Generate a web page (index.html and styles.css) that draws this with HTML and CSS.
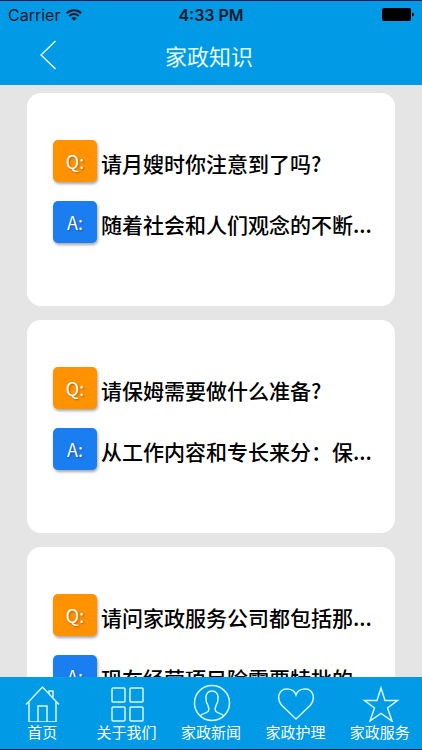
FILE: index.html
```html
<!DOCTYPE html>
<html lang="zh-CN">
<head>
<meta charset="utf-8">
<meta name="viewport" content="width=device-width, initial-scale=1">
<title>家政知识</title>
<link rel="stylesheet" href="styles.css">
</head>
<body>
<div class="app">
  <header class="top">
    <div class="status">
      <div class="carrier">
        <span>Carrier</span>
        <svg class="wifi" viewBox="0 0 16 12" width="16" height="12" fill="none" stroke="#051a28" stroke-width="2">
          <path d="M.8 4.3a10.2 10.2 0 0 1 14.4 0M3.3 7a6.7 6.7 0 0 1 9.4 0"/>
          <path d="M8 11.8 5.4 9.2a3.7 3.7 0 0 1 5.2 0z" fill="#051a28" stroke="none"/>
        </svg>
      </div>
      <time class="clock">4:33 PM</time>
      <svg class="battery" viewBox="0 0 32 13" width="32" height="13" fill="#000">
        <rect width="29" height="13" rx="2"/>
        <path d="M30 4.5q2 .5 2 2t-2 2z"/>
      </svg>
    </div>
    <div class="nav">
      <button class="back" type="button" aria-label="返回">
        <svg viewBox="0 0 17 30" width="17" height="30" fill="none" stroke="#e6fbff" stroke-width="1.5"><path d="M15.500 1 1 15l14.500 14"/></svg>
      </button>
      <h1 class="title">家政知识</h1>
    </div>
  </header>

  <main class="list">
    <article class="card">
      <div class="row"><span class="badge question">Q:</span><p class="text">请月嫂时你注意到了吗?</p></div>
      <div class="row"><span class="badge answer">A:</span><p class="text">随着社会和人们观念的不断...</p></div>
    </article>
    <article class="card">
      <div class="row"><span class="badge question">Q:</span><p class="text">请保姆需要做什么准备?</p></div>
      <div class="row"><span class="badge answer">A:</span><p class="text">从工作内容和专长来分：保...</p></div>
    </article>
    <article class="card">
      <div class="row"><span class="badge question">Q:</span><p class="text">请问家政服务公司都包括那...</p></div>
      <div class="row"><span class="badge answer">A:</span><p class="text">现在经营项目除需要特批的</p></div>
    </article>
  </main>

  <nav class="tabs">
    <a class="tab" href="#home">
      <svg class="icon" viewBox="0 0 38 38"><path d="M2 20.500 18.500 3 35 20.500M5 18v20h27V18M14 38V22h9v16M25 9.500V7h4v6.500"/></svg>
      <span>首页</span>
    </a>
    <a class="tab" href="#about">
      <svg class="icon" viewBox="0 0 38 38"><rect x="3" y="4" width="13" height="14" rx="1"/><rect x="21" y="4" width="13" height="14" rx="1"/><rect x="3" y="23" width="13" height="14" rx="1"/><rect x="21" y="23" width="13" height="14" rx="1"/></svg>
      <span>关于我们</span>
    </a>
    <a class="tab" href="#news">
      <svg class="icon" viewBox="0 0 38 38"><circle cx="19" cy="19" r="17.500"/><path d="M7 32c1-2 6-2.500 8-4.500 1.800-2.500.5-5-.5-7C13.500 19 13 17.500 13 15c-.5-5 2-8 6-8s6.500 3 6 8c0 2.500-.5 4-1.500 5.500-1 2-2.300 4.500-.5 7 2 2 7 2.500 8 4.500"/></svg>
      <span>家政新闻</span>
    </a>
    <a class="tab" href="#care">
      <svg class="icon" viewBox="0 0 38 38"><path d="M19 35 4.500 21C-1 14 2 5 10 5c5 0 8 3 9 6 1-3 4-6 9-6 8 0 11 9 5.500 16z"/></svg>
      <span>家政护理</span>
    </a>
    <a class="tab" href="#service">
      <svg class="icon" viewBox="0 0 38 38"><path d="m19 4 4 12.500h12.500L25.500 24 30 37 19 29.500 8 37 12.500 24 2.500 16.500H15z"/></svg>
      <span>家政服务</span>
    </a>
  </nav>
</div>
</body>
</html>
```
FILE: styles.css
```css
* {
  box-sizing: border-box;
}

body {
  margin: 0;
  font-family: "Noto Sans CJK SC", sans-serif;
  color: #000;
}

.app {
  display: flex;
  flex-direction: column;
  height: 100vh;
  border-top: 1px solid #07204f;
  border-bottom: 1px solid #07204f;
  background: #e5e5e5;
}

.top {
  flex: none;
  background: #009ae7;
}

.status {
  display: grid;
  grid-template-columns: 1fr auto 1fr;
  align-items: center;
  height: 27px;
  padding: 0 8px;
  font-family: Inter, sans-serif;
  font-size: 16px;
  color: #051a28;
}

.carrier {
  display: flex;
  align-items: center;
  gap: 6px;
}

.clock {
  font-weight: 600;
}

.battery {
  justify-self: end;
}

.nav {
  display: grid;
  grid-template-columns: 80px 1fr 84px;
  align-items: center;
  height: 57px;
  padding-bottom: 3px;
}

.back {
  display: flex;
  justify-content: center;
  padding: 0 0 0 16px;
  border: 0;
  background: none;
}

.title {
  margin: 0;
  font-size: 22px;
  font-weight: 400;
  line-height: 32px;
  text-align: center;
  color: #e6fbff;
}

.list {
  flex: 1;
  min-height: 0;
  overflow: hidden;
  display: flex;
  flex-direction: column;
  gap: 14px;
  padding: 8px 27px 0;
}

.card {
  flex: none;
  display: flex;
  flex-direction: column;
  gap: 19px;
  padding: 47px 20px 63px 26px;
  border-radius: 14px;
  background: #fff;
}

.row {
  display: flex;
  gap: 4px;
  height: 42px;
}

.badge {
  flex: none;
  width: 44px;
  border-radius: 5px;
  font-family: "Noto Sans CJK SC", sans-serif;
  font-size: 18px;
  line-height: 42px;
  text-align: center;
  color: #fff;
  text-shadow: 1px 1px 2px rgb(0 0 0 / 35%);
  box-shadow: 1px 2px 3px rgb(0 0 0 / 35%);
}

.question {
  background: #ff9200;
}

.answer {
  background: #1a7df0;
}

.text {
  min-width: 0;
  margin: 0;
  overflow: hidden;
  font-size: 21px;
  font-weight: 500;
  line-height: 46px;
  white-space: nowrap;
}

.tabs {
  flex: none;
  display: grid;
  grid-template-columns: repeat(5, 1fr);
  height: 72px;
  background: #009ae7;
}

.tab {
  display: flex;
  flex-direction: column;
  align-items: center;
  padding-top: 7px;
  font-size: 15px;
  line-height: 20px;
  white-space: nowrap;
  color: #fff;
  text-decoration: none;
}

.icon {
  width: 38px;
  height: 38px;
  margin-left: 2px;
  fill: none;
  stroke: #d5f8ff;
  stroke-width: 1.5;
}
```
